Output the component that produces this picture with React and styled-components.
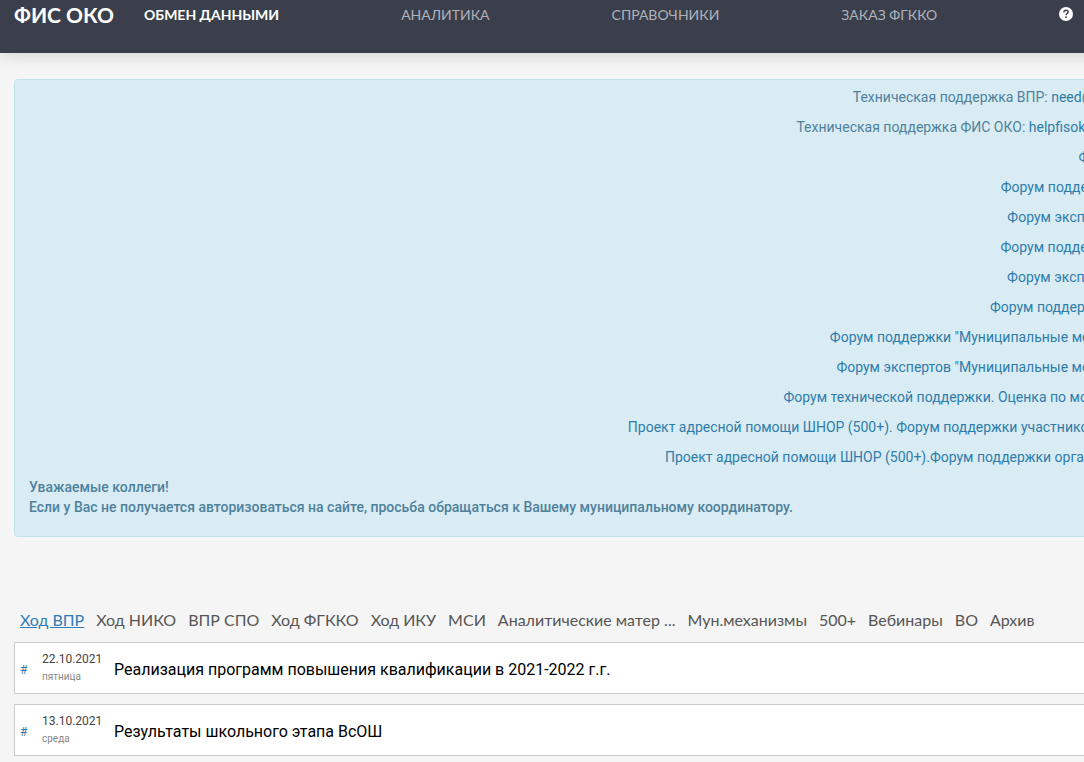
import { useState } from "react";
import styled, { createGlobalStyle } from "styled-components";

const GlobalStyle = createGlobalStyle`
  *, *::before, *::after {
    box-sizing: border-box;
  }
  html {
    overflow-x: hidden;
  }
  body {
    margin: 0;
    background: #f5f5f5;
    color: #333;
    font-family: Roboto, "Liberation Sans", sans-serif;
    font-size: 14px;
    line-height: 20px;
  }
  a {
    color: #2f7cab;
    text-decoration: none;
  }
`;

const Page = styled.div`
  min-width: 1182px;
`;

const Header = styled.header`
  display: flex;
  align-items: flex-start;
  gap: 30px;
  height: 53px;
  padding: 5px 14px 0;
  background: #3b3f4b;
  box-shadow: 0 2px 16px rgba(0, 0, 0, 0.14);
  font-family: Lato, "Open Sans", sans-serif;
`;

const Logo = styled.a`
  color: #fff;
  font-size: 21px;
  font-weight: 700;
  white-space: nowrap;
`;

const Nav = styled.nav`
  display: flex;
  gap: 122px;
`;

const NavLink = styled.a`
  color: ${(props) => (props.$active ? "#fff" : "#aeb2bd")};
  font-size: 14px;
  font-weight: ${(props) => (props.$active ? 700 : 400)};
  white-space: nowrap;
`;

const HelpLink = styled.a`
  display: flex;
  padding-top: 2px;
`;

const Content = styled.main`
  padding: 26px 14px 0;
`;

const Alert = styled.section`
  padding: 7px 14px 19px;
  border: 1px solid #bfe3ea;
  border-radius: 4px;
  background: #d9ecf4;
  color: #4f819c;
`;

const Contacts = styled.div`
  text-align: right;
  p {
    margin: 0 0 10px;
    white-space: nowrap;
  }
`;

const Notice = styled.p`
  margin: 0;
  font-weight: 500;
`;

const Tabs = styled.div`
  display: flex;
  gap: 12px;
  margin-top: 73px;
  padding: 0 6px;
  font-family: Lato, "Open Sans", sans-serif;
`;

const Tab = styled.button`
  padding: 0;
  border: 0;
  background: none;
  color: ${(props) => (props.$active ? "#2f7cb7" : "#555")};
  font-family: inherit;
  font-size: 16px;
  line-height: 20px;
  text-decoration: ${(props) => (props.$active ? "underline" : "none")};
  white-space: nowrap;
  cursor: pointer;
`;

const NewsList = styled.div`
  display: flex;
  flex-direction: column;
  gap: 10px;
  margin-top: 12px;
`;

const NewsItem = styled.article`
  display: flex;
  align-items: center;
  height: 52px;
  padding: 4px 5px 0;
  border: 1px solid #ccc;
  background: #fff;
`;

const Anchor = styled.a`
  width: 22px;
  font-size: 12px;
`;

const DateBlock = styled.div`
  width: 72px;
  padding-bottom: 4px;
  color: #444;
  font-size: 12px;
  line-height: 17px;
  small {
    display: block;
    color: #888;
    font-size: 10px;
  }
`;

const NewsTitle = styled.a`
  color: #000;
  font-size: 16px;
`;

const navItems = ["ОБМЕН ДАННЫМИ", "АНАЛИТИКА", "СПРАВОЧНИКИ", "ЗАКАЗ ФГККО"];

const forums = [
  "Форум ВПР",
  "Форум поддержки ВПР",
  "Форум экспертов ВПР",
  "Форум поддержки ИКУ",
  "Форум экспертов ИКУ",
  "Форум поддержки НИКО",
  'Форум поддержки "Муниципальные механизмы"',
  'Форум экспертов "Муниципальные механизмы"',
  "Форум технической поддержки. Оценка по модели PISA",
  "Проект адресной помощи ШНОР (500+). Форум поддержки участников проекта",
  "Проект адресной помощи ШНОР (500+).Форум поддержки организаторов",
];

const tabs = [
  "Ход ВПР",
  "Ход НИКО",
  "ВПР СПО",
  "Ход ФГККО",
  "Ход ИКУ",
  "МСИ",
  "Аналитические матер ...",
  "Мун.механизмы",
  "500+",
  "Вебинары",
  "ВО",
  "Архив",
];

const news = [
  {
    date: "22.10.2021",
    day: "пятница",
    title: "Реализация программ повышения квалификации в 2021-2022 г.г.",
  },
  {
    date: "13.10.2021",
    day: "среда",
    title: "Результаты школьного этапа ВсОШ",
  },
];

function HelpIcon() {
  return (
    <svg width="14" height="14" viewBox="0 0 14 14" aria-hidden="true">
      <circle cx="7" cy="7" r="7" fill="#fff" />
      <path
        d="M4.9 5.4C4.9 4 5.8 3.3 7 3.3s2.1.7 2.1 1.8C9.1 6.5 7 6.6 7 8.3"
        fill="none"
        stroke="#3b3f4b"
        strokeWidth="1.5"
      />
      <rect x="6.2" y="9.4" width="1.6" height="1.6" fill="#3b3f4b" />
    </svg>
  );
}

export default function App() {
  const [activeTab, setActiveTab] = useState("Ход ВПР");

  return (
    <Page>
      <GlobalStyle />
      <Header>
        <Logo href="#">ФИС ОКО</Logo>
        <Nav>
          {navItems.map((item, i) => (
            <NavLink key={item} href="#" $active={i === 0}>
              {item}
            </NavLink>
          ))}
          <HelpLink href="#" aria-label="Помощь">
            <HelpIcon />
          </HelpLink>
        </Nav>
      </Header>
      <Content>
        <Alert>
          <Contacts>
            <p>
              Техническая поддержка ВПР: <a href="#">need@fioco.info</a>
            </p>
            <p>
              Техническая поддержка ФИС ОКО: <a href="#">helpfisoko@fioco.ru</a>
            </p>
            {forums.map((forum) => (
              <p key={forum}>
                <a href="#">{forum}</a>
              </p>
            ))}
          </Contacts>
          <Notice>
            Уважаемые коллеги!
            <br />
            Если у Вас не получается авторизоваться на сайте, просьба обращаться
            к Вашему муниципальному координатору.
          </Notice>
        </Alert>
        <Tabs role="tablist">
          {tabs.map((tab) => (
            <Tab
              key={tab}
              role="tab"
              aria-selected={tab === activeTab}
              $active={tab === activeTab}
              onClick={() => setActiveTab(tab)}
            >
              {tab}
            </Tab>
          ))}
        </Tabs>
        <NewsList>
          {news.map((item) => (
            <NewsItem key={item.date}>
              <Anchor href="#">#</Anchor>
              <DateBlock>
                {item.date}
                <small>{item.day}</small>
              </DateBlock>
              <NewsTitle href="#">{item.title}</NewsTitle>
            </NewsItem>
          ))}
        </NewsList>
      </Content>
    </Page>
  );
}
